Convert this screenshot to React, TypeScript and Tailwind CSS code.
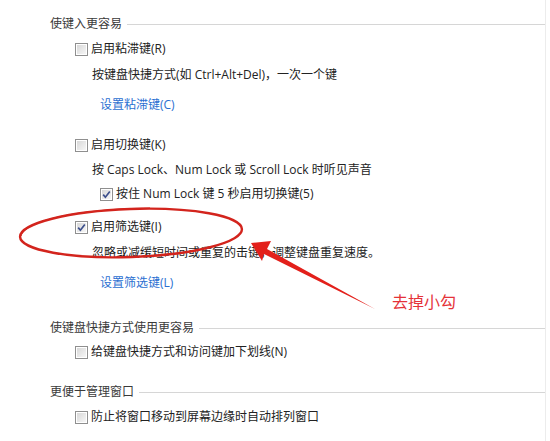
import React from "react";

const FONT = { fontFamily: '"Open Sans", "Noto Sans CJK SC", sans-serif' };

function Box({ checked }: { checked?: boolean }) {
  return (
    <span className="flex h-[13px] w-[13px] shrink-0 items-center justify-center border border-[#8f8f8f] bg-white">
      <span className="flex h-[11px] w-[11px] items-center justify-center border border-white bg-gradient-to-br from-[#d8d8d8] to-[#f6f6f6]">
        {checked && (
          <svg width="9" height="9" viewBox="0 0 9 9" aria-hidden="true">
            <path d="M1.2 4.6 L3.4 7.2 L7.8 1.4" fill="none" stroke="#3c4f8c" strokeWidth="1.7" />
          </svg>
        )}
      </span>
    </span>
  );
}

function Check({ label, checked, mt, indent = 25 }: { label: string; checked?: boolean; mt: number; indent?: number }) {
  return (
    <div className="flex h-[20px] items-center gap-[3px] text-[12px] text-[#222]" style={{ marginTop: mt, paddingLeft: indent }}>
      <Box checked={checked} />
      <span className="leading-none">{label}</span>
    </div>
  );
}

function Heading({ title, mt }: { title: string; mt: number }) {
  return (
    <div className="flex h-[20px] items-center gap-[5px]" style={{ marginTop: mt }}>
      <span className="text-[12px] leading-none text-[#3a3a3a]">{title}</span>
      <span className="h-px flex-1 bg-[#d6d6d6]" />
    </div>
  );
}

function Line({ text, mt, link }: { text: string; mt: number; link?: boolean }) {
  return (
    <div
      className={`flex h-[20px] items-center text-[12px] leading-none ${link ? "pl-[50px] text-[#2b6fd1]" : "pl-[42px] text-[#222]"}`}
      style={{ marginTop: mt }}
    >
      {text}
    </div>
  );
}

export default function App() {
  return (
    <div className="relative h-[441px] w-[550px] overflow-hidden bg-white" style={FONT}>
      <div className="h-full w-[546px] border-r border-[#ececec] pl-[50px] pt-[14px]">
        <Heading title="使键入更容易" mt={0} />
        <Check label="启用粘滞键(R)" mt={5} />
        <Line text="按键盘快捷方式(如 Ctrl+Alt+Del)，一次一个键" mt={6} />
        <Line text="设置粘滞键(C)" mt={10} link />
        <Check label="启用切换键(K)" mt={20} />
        <Line text="按 Caps Lock、Num Lock 或 Scroll Lock 时听见声音" mt={5} />
        <Check label="按住 Num Lock 键 5 秒启用切换键(5)" mt={4} checked indent={50} />
        <Check label="启用筛选键(I)" mt={13} checked />
        <Line text="忽略或减缓短时间或重复的击键，调整键盘重复速度。" mt={6} />
        <Line text="设置筛选键(L)" mt={10} link />
        <Heading title="使键盘快捷方式使用更容易" mt={25} />
        <Check label="给键盘快捷方式和访问键加下划线(N)" mt={4} />
        <Heading title="更便于管理窗口" mt={20} />
        <Check label="防止将窗口移动到屏幕边缘时自动排列窗口" mt={5} />
      </div>

      {/* annotation overlay */}
      <svg className="pointer-events-none absolute left-0 top-0" width="550" height="441" aria-hidden="true">
        <ellipse cx="131" cy="233" rx="111" ry="24" fill="none" stroke="#d3241d" strokeWidth="2.4" transform="rotate(-2 131 233)" />
        <path d="M21 236 C26 220 80 209 150 208" fill="none" stroke="#d3241d" strokeWidth="1" />
        <polygon points="251,243 271,241 267,249 375,309 264,254 262,261" fill="#e3201b" />
      </svg>
      <span className="absolute left-[392px] top-[294px] text-[16px] leading-none text-[#e53238]">去掉小勾</span>
    </div>
  );
}
